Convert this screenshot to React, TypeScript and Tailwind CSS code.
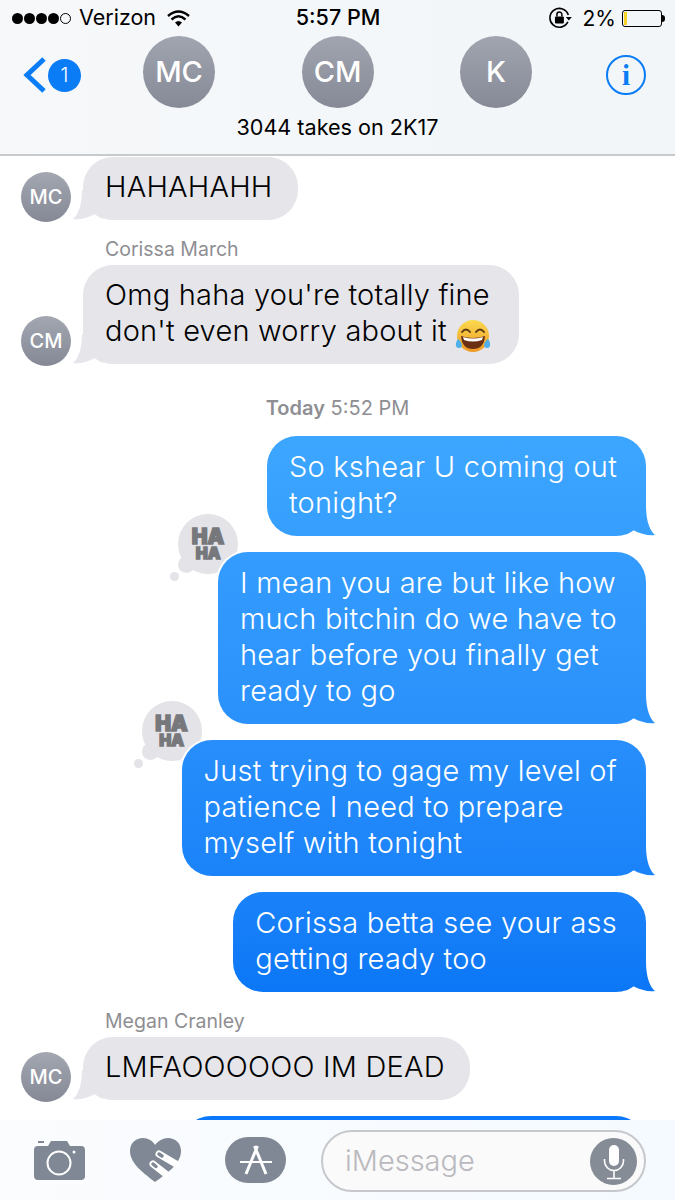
import type { ReactNode } from "react";

const font = "[font-family:Inter,'Noto_Sans',sans-serif]";

function Avatar({ label }: { label: string }) {
  return (
    <div className="flex h-[50px] w-[50px] flex-shrink-0 items-center justify-center rounded-full bg-gradient-to-b from-[#a3a7b2] to-[#858995] text-[20px] font-medium text-white">
      {label}
    </div>
  );
}

function HeaderAvatar({ label }: { label: string }) {
  return (
    <div className="flex h-[72px] w-[72px] flex-shrink-0 items-center justify-center rounded-full bg-gradient-to-b from-[#a1a5b0] to-[#868a96] text-[29px] font-medium text-white">
      {label}
    </div>
  );
}

function LeftTail() {
  return (
    <svg className="absolute bottom-0 left-[-10px] h-[30px] w-[30px] fill-[#e5e5ea]" viewBox="0 0 30 30">
      <path d="M9 0 C9 15 5 25 0 29 C6 30 15 28 22 24 C24 26 27 28 30 28.6 L30 0 Z" />
    </svg>
  );
}

function RightTail({ className }: { className: string }) {
  return (
    <svg className={`absolute bottom-0 right-[-9px] h-[30px] w-[30px] ${className}`} viewBox="0 0 30 30">
      <path d="M21 0 C21 15 25 25 30 29 C24 30 15 28 8 24 C6 26 3 28 0 28.6 L0 0 Z" />
    </svg>
  );
}

function Incoming({ avatar, name, children, className = "" }: { avatar: string; name?: string; children: ReactNode; className?: string }) {
  return (
    <div className={`pl-[21px] ${className}`}>
      {name && <div className="mb-[5px] ml-[84px] text-[19.5px] leading-[22px] text-[#8e8e93]">{name}</div>}
      <div className="flex items-end gap-[12px]">
        <div className="mb-[-2px]">
          <Avatar label={avatar} />
        </div>
        <div className="relative rounded-[30px] bg-[#e5e5ea] pb-[15px] pl-[22px] pr-[25px] pt-[12px] text-[29px] leading-[36px] tracking-[0.2px] text-black [font-weight:350]">
          <LeftTail />
          <div className="relative">{children}</div>
        </div>
      </div>
    </div>
  );
}

function HahaBadge({ className }: { className: string }) {
  return (
    <div className={`absolute z-0 h-[67px] w-[68px] ${className}`}>
      <div className="absolute right-0 top-0 flex h-[60px] w-[60px] flex-col items-center justify-center rounded-full bg-[#e3e3e8] font-black text-[#77787c] [-webkit-text-stroke:1.5px_#77787c]">
        <span className="text-[21px] leading-[19px]">HA</span>
        <span className="text-[16px] leading-[15px]">HA</span>
      </div>
      <div className="absolute bottom-[8px] left-[8px] h-[17px] w-[17px] rounded-full bg-[#e3e3e8]" />
      <div className="absolute bottom-0 left-0 h-[9px] w-[9px] rounded-full bg-[#e3e3e8]" />
    </div>
  );
}

function Outgoing({ children, gradient, tail, className = "", badge }: { children: ReactNode; gradient: string; tail: string; className?: string; badge?: ReactNode }) {
  return (
    <div className={`flex justify-end pr-[29px] ${className}`}>
      <div className="relative">
        {badge}
        <div className="relative z-10">
          {/* white rim cuts the reaction badge where it meets the bubble */}
          <div className="absolute -inset-[2px] rounded-[32px] bg-white" />
          <RightTail className={tail} />
          <div className={`relative rounded-[30px] pb-[15px] pl-[22px] pr-[29px] pt-[13px] text-[29px] font-light leading-[36px] tracking-[0.22px] text-white ${gradient}`}>
            {children}
          </div>
        </div>
      </div>
    </div>
  );
}

function LaughEmoji() {
  return (
    <svg className="-my-2 ml-[8px] mr-[3px] inline-block h-[36px] w-[36px] align-[-6px]" viewBox="0 0 36 36">
      <defs>
        <linearGradient id="face" x1="0" y1="0" x2="0" y2="1">
          <stop offset="0" stopColor="#fbd94e" />
          <stop offset="1" stopColor="#ee9a26" />
        </linearGradient>
      </defs>
      <circle cx="18" cy="17" r="16" fill="url(#face)" />
      <path d="M7 13 Q11 8 15 13 M21 13 Q25 8 29 13" fill="none" stroke="#5b3a14" strokeWidth="2" strokeLinecap="round" />
      <path d="M6 17 Q18 21 30 17 Q29 30 18 30 Q7 30 6 17 Z" fill="#6b2f14" />
      <path d="M8 18 Q18 21 28 18 L27 21 Q18 24 9 21 Z" fill="#fff" />
      <path d="M3 20 C0 24 0 29 4 29 C8 29 8 24 3 20 Z M33 20 C36 24 36 29 32 29 C28 29 28 24 33 20 Z" fill="#4fb0ec" />
    </svg>
  );
}

function StatusBar() {
  return (
    <div className="flex h-[36px] items-center pl-[12px] pr-[10px] text-[21px] leading-none text-black">
      <div className="flex w-[278px] items-center">
        <div className="flex items-center gap-[1px]">
          {[0, 1, 2, 3].map((i) => (
            <span key={i} className="h-[11px] w-[11px] rounded-full bg-black" />
          ))}
          <span className="h-[11px] w-[11px] rounded-full border border-black" />
        </div>
        <span className="ml-[8px] text-[21.5px]">Verizon</span>
        <svg className="ml-[11px] h-[17px] w-[23px]" viewBox="0 0 23 17">
          <path d="M1 6 Q11.5 -3 22 6 M4.5 9.5 Q11.5 3 18.5 9.5" fill="none" stroke="#000" strokeWidth="2.4" />
          <path d="M8 12.5 Q11.5 9.5 15 12.5 L11.5 16.5 Z" fill="#000" />
        </svg>
      </div>
      <span className="ml-[8px] w-[255px] text-[21.5px] font-medium">5:57 PM</span>
      <svg className="h-[22px] w-[23px]" viewBox="0 0 23 22">
        <path d="M19 15 A9.5 9.5 0 1 1 19.5 8" fill="none" stroke="#000" strokeWidth="1.6" />
        <path d="M17 10 L23 10 L20 13.5 Z" fill="#000" />
        <rect x="6" y="9.5" width="9" height="7" rx="1" fill="#000" />
        <path d="M8 9.5 V7.5 A2.5 2.5 0 0 1 13 7.5 V9.5" fill="none" stroke="#000" strokeWidth="1.5" />
      </svg>
      <span className="ml-[11px] text-[21px]">2%</span>
      <div className="ml-[6px] flex items-center">
        <div className="flex h-[17px] w-[40px] items-stretch rounded-[3px] border border-black p-[1px]">
          <div className="w-[3px] bg-[#f5d327]" />
        </div>
        <div className="h-[7px] w-[3px] rounded-r-full bg-black" />
      </div>
    </div>
  );
}

function Header() {
  return (
    <div className="h-[156px] flex-shrink-0 border-b-2 border-[#c9cacc] bg-gradient-to-r from-[#f6f8fa] to-[#f2f6f8]">
      <StatusBar />
      <div className="flex h-[72px] items-center pl-[23px]">
        <div className="flex items-center">
          <svg className="mt-[6px] h-[38px] w-[24px]" viewBox="0 0 24 38">
            <path d="M21 3 L4 19 L21 35" fill="none" stroke="#0a7cf6" strokeWidth="5" />
          </svg>
          <div className="ml-[1px] mt-[6px] flex h-[33px] w-[33px] items-center justify-center rounded-full bg-[#0a7cf6] text-[20px] font-light text-white">1</div>
        </div>
        <div className="ml-[62px] flex gap-[86.5px]">
          <HeaderAvatar label="MC" />
          <HeaderAvatar label="CM" />
          <HeaderAvatar label="K" />
        </div>
        <div className="ml-[74px] mt-[6px] flex h-[40px] w-[40px] items-center justify-center rounded-full border-2 border-[#0a7cf6] text-[29px] font-bold leading-none text-[#0a7cf6] [font-family:'Liberation_Serif',serif]">
          i
        </div>
      </div>
      <div className="mt-[6px] text-center text-[21.6px] leading-[26px] text-black">3044 takes on 2K17</div>
    </div>
  );
}

function Footer() {
  return (
    <div className="flex h-[80px] flex-shrink-0 items-center bg-gradient-to-r from-[#fbfcfe] to-[#f4faff] pl-[34px]">
      <svg className="h-[40px] w-[51px]" viewBox="0 0 51 40">
        <path d="M4 6 H14 L17 1 H33 L36 6 H47 Q51 6 51 10 V36 Q51 40 47 40 H4 Q0 40 0 36 V10 Q0 6 4 6 Z" fill="#7f8894" />
        <rect x="4" y="1" width="6" height="2" fill="#7f8894" />
        <circle cx="25" cy="23" r="11.5" fill="none" stroke="#fff" strokeWidth="2" />
        <circle cx="40" cy="12" r="1.5" fill="#fff" />
      </svg>
      <svg className="ml-[45px] h-[44px] w-[51px]" viewBox="0 0 51 44">
        <path d="M25 44 C15 36 0 26 0 13 C0 5 6 0 13 0 C18 0 23 3 25 7 C28 3 33 0 38 0 C45 0 51 5 51 13 C51 26 36 36 25 44 Z" fill="#7f8894" />
        <path d="M29 16 L46 26 M23 26 L37 37" stroke="#fff" strokeWidth="7" strokeLinecap="round" />
        <path d="M29 16 L32 18 M23 26 L26 28.5" stroke="#7f8894" strokeWidth="3.5" strokeLinecap="round" />
      </svg>
      <div className="ml-[44px] flex h-[46px] w-[61px] items-center justify-center rounded-full bg-[#7f8894]">
        <svg className="h-[32px] w-[34px]" viewBox="0 0 34 32">
          <path d="M18.5 2 L7 30 M15.5 2 L27 30" stroke="#fff" strokeWidth="3" />
          <path d="M1 18 H33" stroke="#fff" strokeWidth="2" />
        </svg>
      </div>
      <div className="relative ml-[35px] mt-[2px] flex h-[62px] w-[325px] items-center rounded-full border-2 border-[#c6c8cc] bg-[#fafafa] pl-[22px] text-[29px] font-light text-[#b9b9be]">
        iMessage
        <div className="absolute right-[7px] top-[6px] flex h-[47px] w-[47px] items-center justify-center rounded-full bg-[#858c96]">
          <svg className="h-[36px] w-[24px]" viewBox="0 0 24 36">
            <rect x="7" y="1" width="10" height="21" rx="5" fill="#fff" />
            <path d="M2.5 15 V17 A9.5 9.5 0 0 0 21.5 17 V15 M12 27 V34 M5 34.5 H19" fill="none" stroke="#fff" strokeWidth="1.6" />
          </svg>
        </div>
      </div>
    </div>
  );
}

export default function App() {
  return (
    <div className={`flex h-[1200px] w-[675px] flex-col overflow-hidden bg-white ${font}`}>
      <Header />
      <div className="flex-1 overflow-hidden">
        <Incoming avatar="MC" className="mt-[1px]">
          HAHAHAHH
        </Incoming>
        <Incoming avatar="CM" name="Corissa March" className="mt-[18px]">
          Omg haha you're totally fine
          <br />
          don't even worry about it
          <LaughEmoji />
        </Incoming>
        <div className="mt-[32px] text-center text-[20px] leading-[24px] text-[#8e8e93]">
          <span className="font-semibold">Today</span> 5:52 PM
        </div>
        <Outgoing className="mt-[16px]" gradient="bg-gradient-to-b from-[#3ca6ff] to-[#369ffe]" tail="fill-[#369ffe]">
          So kshear U coming out
          <br />
          tonight?
        </Outgoing>
        <Outgoing
          className="mt-[16px]"
          gradient="bg-gradient-to-b from-[#349cfe] to-[#2a91fb]"
          tail="fill-[#2a91fb]"
          badge={<HahaBadge className="left-[-48px] top-[-38px]" />}
        >
          I mean you are but like how
          <br />
          much bitchin do we have to
          <br />
          hear before you finally get
          <br />
          ready to go
        </Outgoing>
        <Outgoing
          className="mt-[16px]"
          gradient="bg-gradient-to-b from-[#278efb] to-[#1b83f9]"
          tail="fill-[#1b83f9]"
          badge={<HahaBadge className="left-[-48px] top-[-39px]" />}
        >
          Just trying to gage my level of
          <br />
          patience I need to prepare
          <br />
          myself with tonight
        </Outgoing>
        <Outgoing className="mt-[16px]" gradient="bg-gradient-to-b from-[#1a82f9] to-[#0b77f6]" tail="fill-[#0b77f6]">
          Corissa betta see your ass
          <br />
          getting ready too
        </Outgoing>
        <Incoming avatar="MC" name="Megan Cranley" className="mt-[18px]">
          LMFAOOOOOO IM DEAD
        </Incoming>
        <div className="ml-[181px] mt-[16px] h-[30px] w-[465px] rounded-t-[30px] bg-[#0a78f8]" />
      </div>
      <Footer />
    </div>
  );
}
